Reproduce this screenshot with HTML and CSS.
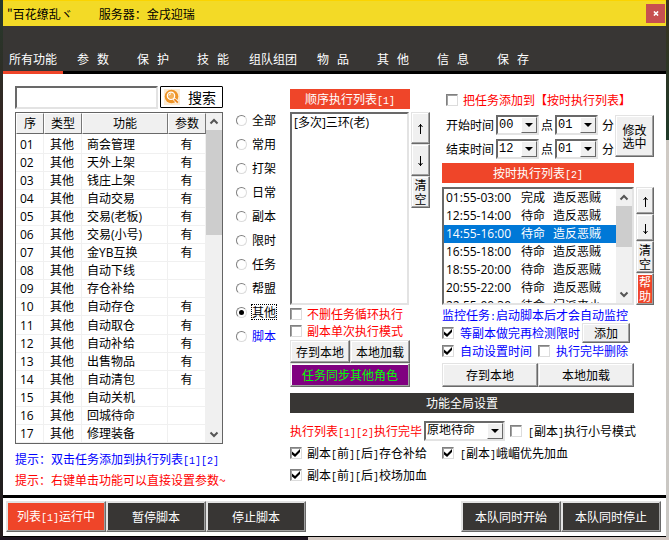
FILE: index.html
```html
<!DOCTYPE html>
<html lang="zh-CN">
<head>
<meta charset="utf-8">
<title>百花缭乱</title>
<link rel="stylesheet" href="styles.css">
</head>
<body>
<div class="window">
  <header class="titlebar">
    <span>"百花缭乱ヾ</span>
    <span class="server">服务器：金戌迎瑞</span>
    <button class="close" type="button" aria-label="关闭"><svg viewBox="0 0 7 6" width="6" height="5"><path d="M1 0.5L6 5.5M6 0.5L1 5.5" stroke="#fff" stroke-width="1.8"/></svg></button>
  </header>
  <nav class="tabs">
    <a class="tab active" href="#all">所有功能</a>
    <a class="tab" href="#params">参   数</a>
    <a class="tab" href="#protect">保   护</a>
    <a class="tab" href="#skills">技   能</a>
    <a class="tab" href="#team">组队组团</a>
    <a class="tab" href="#items">物   品</a>
    <a class="tab" href="#other">其   他</a>
    <a class="tab" href="#info">信   息</a>
    <a class="tab" href="#save">保   存</a>
  </nav>

  <main class="content">
    <section class="functions">
      <form class="search">
        <input class="search-box" type="text" aria-label="搜索功能">
        <button class="search-btn" type="button">
          <svg viewBox="0 0 16 16" width="16" height="16"><rect width="16" height="16" fill="#fdebd2"/><circle cx="7.5" cy="7.5" r="6.8" fill="#ee9426"/><circle cx="7" cy="6.8" r="3.7" fill="#f5b057" stroke="#fff" stroke-width="1.2"/><path d="M5 6.5a2.2 2.2 0 0 1 2-1.7" fill="none" stroke="#fff"/><path d="M9.8 9.6L13.4 13.2" stroke="#fff" stroke-width="3"/><path d="M10.3 10.1L13.8 13.6" stroke="#e9821c" stroke-width="1.8"/></svg>
          <span>搜索</span>
        </button>
      </form>
      <div class="grid-box">
        <table class="grid">
          <colgroup><col class="c-no"><col class="c-type"><col class="c-name"><col class="c-arg"></colgroup>
          <thead><tr><th>序</th><th>类型</th><th>功能</th><th>参数</th></tr></thead>
          <tbody>
            <tr><td>01</td><td>其他</td><td>商会管理</td><td>有</td></tr>
            <tr><td>02</td><td>其他</td><td>天外上架</td><td>有</td></tr>
            <tr><td>03</td><td>其他</td><td>钱庄上架</td><td>有</td></tr>
            <tr><td>04</td><td>其他</td><td>自动交易</td><td>有</td></tr>
            <tr><td>05</td><td>其他</td><td>交易(老板)</td><td>有</td></tr>
            <tr><td>06</td><td>其他</td><td>交易(小号)</td><td>有</td></tr>
            <tr><td>07</td><td>其他</td><td>金YB互换</td><td>有</td></tr>
            <tr><td>08</td><td>其他</td><td>自动下线</td><td></td></tr>
            <tr><td>09</td><td>其他</td><td>存仓补给</td><td></td></tr>
            <tr><td>10</td><td>其他</td><td>自动存仓</td><td>有</td></tr>
            <tr><td>11</td><td>其他</td><td>自动取仓</td><td>有</td></tr>
            <tr><td>12</td><td>其他</td><td>自动补给</td><td>有</td></tr>
            <tr><td>13</td><td>其他</td><td>出售物品</td><td>有</td></tr>
            <tr><td>14</td><td>其他</td><td>自动清包</td><td>有</td></tr>
            <tr><td>15</td><td>其他</td><td>自动关机</td><td></td></tr>
            <tr><td>16</td><td>其他</td><td>回城待命</td><td></td></tr>
            <tr><td>17</td><td>其他</td><td>修理装备</td><td></td></tr>
          </tbody>
        </table>
        <div class="scrollbar">
          <svg class="chev" viewBox="0 0 16 17"><path d="M4.5 10.5L8 7L11.5 10.5" /></svg>
          <span class="thumb thumb-long"></span>
          <svg class="chev end" viewBox="0 0 16 17"><path d="M4.5 6.5L8 10L11.5 6.5" /></svg>
        </div>
      </div>
      <p class="tip blue">提示：双击任务添加到执行列表<span class="n">[1][2]</span></p>
      <p class="tip red">提示：右键单击功能可以直接设置参数~</p>
    </section>

    <fieldset class="filters" aria-label="分类">
      <label><input type="radio" name="cat"><span>全部</span></label>
      <label><input type="radio" name="cat"><span>常用</span></label>
      <label><input type="radio" name="cat"><span>打架</span></label>
      <label><input type="radio" name="cat"><span>日常</span></label>
      <label><input type="radio" name="cat"><span>副本</span></label>
      <label><input type="radio" name="cat"><span>限时</span></label>
      <label><input type="radio" name="cat"><span>任务</span></label>
      <label><input type="radio" name="cat"><span>帮盟</span></label>
      <label><input type="radio" name="cat" checked><span class="focused">其他</span></label>
      <label class="blue"><input type="radio" name="cat"><span>脚本</span></label>
    </fieldset>

    <section class="plans">
      <div class="columns">
        <div class="sequence">
          <h2 class="bar">顺序执行列表<span class="n">[1]</span></h2>
          <div class="list-row seq-row">
            <ul class="listbox"><li>[多次]三环(老)</li></ul>
            <div class="side">
              <button class="btn" type="button" aria-label="上移"><svg viewBox="0 0 7 12" width="7" height="12"><path d="M3.5 1V11M1.5 4L3.5 1.5L5.5 4"/></svg></button>
              <button class="btn" type="button" aria-label="下移"><svg viewBox="0 0 7 12" width="7" height="12"><path d="M3.5 1V11M1.5 8L3.5 10.5L5.5 8"/></svg></button>
              <button class="btn" type="button">清空</button>
            </div>
          </div>
          <label class="check short red"><input type="checkbox"><span>不删任务循环执行</span></label>
          <label class="check short red"><input type="checkbox"><span>副本单次执行模式</span></label>
          <div class="pair seq-pair">
            <button class="btn" type="button">存到本地</button><button class="btn" type="button">本地加载</button>
          </div>
          <button class="btn sync" type="button">任务同步其他角色</button>
        </div>

        <div class="timed">
          <label class="check add-timed red"><input type="checkbox"><span>把任务添加到【按时执行列表】</span></label>
          <div class="times">
            <div class="time-rows">
              <div class="time-row">
                <label for="sh">开始时间</label>
                <span class="combo"><select id="sh"><option>00</option></select><i class="drop"></i></span>
                <label for="sm">点</label>
                <span class="combo"><select id="sm"><option>01</option></select><i class="drop"></i></span>
                <span class="unit">分</span>
              </div>
              <div class="time-row">
                <label for="eh">结束时间</label>
                <span class="combo"><select id="eh"><option>12</option></select><i class="drop"></i></span>
                <label for="em">点</label>
                <span class="combo"><select id="em"><option>01</option></select><i class="drop"></i></span>
                <span class="unit">分</span>
              </div>
            </div>
            <button class="btn modify" type="button">修改<br>选中</button>
          </div>
          <h2 class="bar">按时执行列表<span class="n">[2]</span></h2>
          <div class="list-row timed-row">
            <div class="listbox with-scroll">
              <ul>
                <li><span>01:55-03:00</span><span>完成</span><span>造反恶贼</span></li>
                <li><span>12:55-14:00</span><span>待命</span><span>造反恶贼</span></li>
                <li class="selected"><span>14:55-16:00</span><span>待命</span><span>造反恶贼</span></li>
                <li><span>16:55-18:00</span><span>待命</span><span>造反恶贼</span></li>
                <li><span>18:55-20:00</span><span>待命</span><span>造反恶贼</span></li>
                <li><span>20:55-22:00</span><span>待命</span><span>造反恶贼</span></li>
                <li><span>22:55-00:30</span><span>待命</span><span>门派来小</span></li>
              </ul>
              <div class="scrollbar">
                <svg class="chev" viewBox="0 0 16 17"><path d="M4.5 10.5L8 7L11.5 10.5" /></svg>
                <span class="thumb"></span>
                <svg class="chev end" viewBox="0 0 16 17"><path d="M4.5 6.5L8 10L11.5 6.5" /></svg>
              </div>
            </div>
            <div class="side">
              <button class="btn" type="button" aria-label="上移"><svg viewBox="0 0 7 12" width="7" height="12"><path d="M3.5 1V11M1.5 4L3.5 1.5L5.5 4"/></svg></button>
              <button class="btn" type="button" aria-label="下移"><svg viewBox="0 0 7 12" width="7" height="12"><path d="M3.5 1V11M1.5 8L3.5 10.5L5.5 8"/></svg></button>
              <button class="btn tall" type="button">清空</button>
              <button class="btn tall help" type="button">帮助</button>
            </div>
          </div>
          <p class="monitor blue">监控任务<span class="n">:</span>启动脚本后才会自动监控</p>
          <div class="option-row blue">
            <label class="check"><input type="checkbox" checked><span>等副本做完再检测限时</span></label>
            <button class="btn add" type="button">添加</button>
          </div>
          <div class="option-row spaced blue">
            <label class="check"><input type="checkbox" checked><span>自动设置时间</span></label>
            <label class="check"><input type="checkbox"><span>执行完毕删除</span></label>
          </div>
          <div class="pair timed-pair">
            <button class="btn" type="button">存到本地</button><button class="btn" type="button">本地加载</button>
          </div>
        </div>
      </div>

      <h2 class="bar dark">功能全局设置</h2>
      <div class="finish">
        <label class="red" for="after">执行列表<span class="n">[1][2]</span>执行完毕</label>
        <span class="combo wide"><select id="after"><option>原地待命</option></select><i class="drop"></i></span>
        <label class="check"><input type="checkbox"><span><span class="n">[</span>副本<span class="n">]</span>执行小号模式</span></label>
      </div>
      <div class="globals">
        <label class="check short"><input type="checkbox" checked><span>副本<span class="n">[</span>前<span class="n">][</span>后<span class="n">]</span>存仓补给</span></label>
        <label class="check"><input type="checkbox" checked><span><span class="n">[</span>副本<span class="n">]</span>峨嵋优先加血</span></label>
        <label class="check short"><input type="checkbox" checked><span>副本<span class="n">[</span>前<span class="n">][</span>后<span class="n">]</span>校场加血</span></label>
      </div>
    </section>
  </main>

  <footer class="actions">
    <div class="group">
      <button class="btn action running" type="button">列表<span class="n">[1]</span>运行中</button>
      <button class="btn action" type="button">暂停脚本</button>
      <button class="btn action" type="button">停止脚本</button>
    </div>
    <div class="group">
      <button class="btn action" type="button">本队同时开始</button>
      <button class="btn action" type="button">本队同时停止</button>
    </div>
  </footer>
</div>
</body>
</html>
```
FILE: styles.css
```css
* { box-sizing: border-box; }

body {
  margin: 0;
  min-height: 100vh;
  padding: 0 3px 3px;
  display: flex;
  font: 12px/18px "Noto Sans CJK SC", sans-serif;
  color: #000;
  background:
    linear-gradient(90deg, #1d1420 46%, #d3c8c2 46%) bottom / 100% 3px no-repeat,
    linear-gradient(#263a2c, #3a1a1c 35%, #1c2c22 60%, #241a1e) left / 3px 100% no-repeat,
    linear-gradient(#3b3322, #1f3a28 26%, #cfcac4 26%, #c9c7c3) right / 3px 100% no-repeat;
}

h2, p, ul, fieldset { margin: 0; padding: 0; border: 0; font-size: 12px; font-weight: normal; }
ul { list-style: none; }
button, input, select { font: inherit; color: inherit; margin: 0; padding: 0; }
.blue { color: #00f; }
.red { color: #f00; }
.n { font-family: "Liberation Mono", monospace; font-size: 10px; line-height: 1; }

.window {
  flex: 1;
  min-width: 0;
  display: flex;
  flex-direction: column;
  background: #fff;
  border-bottom: 1px solid #000;
}

.titlebar {
  display: flex;
  align-items: center;
  height: 26px;
  padding: 0 1px 0 4px;
  border-top: 1px solid #fbd400;
  background: #f3da26;
}
.server { margin-left: 26px; }
.close {
  width: 19px;
  height: 19px;
  margin-left: auto;
  display: flex;
  align-items: center;
  justify-content: center;
  border: 0;
  background: #c75050;
}

.tabs {
  display: flex;
  padding-top: 24px;
  background: linear-gradient(#383634, #383634) top / 100% calc(100% - 3px) no-repeat #000;
}
.tab {
  width: 60px;
  height: 24px;
  line-height: 18px;
  border-bottom: 3px solid transparent;
  color: #fff;
  text-align: center;
  text-decoration: none;
  white-space: pre;
}
.tab.active { border-color: #ef4529; }

.content {
  flex: 1;
  display: grid;
  grid-template-columns: minmax(0, 208fr) 67px minmax(0, 364fr);
  padding: 12px 12px 5px;
}

/* Function table */
.functions { min-width: 0; }
.search { display: flex; gap: 2px; height: 23px; margin-bottom: 3px; }
.search-box {
  flex: 1;
  min-width: 0;
  border: 2px solid;
  border-color: #696969 #e3e3e3 #e3e3e3 #696969;
  border-radius: 0;
  background: #fff;
}
.search-btn {
  width: 63px;
  height: 22px;
  display: flex;
  align-items: center;
  gap: 8px;
  padding-left: 3px;
  border: 1px solid #000;
  background: #fff;
  font-size: 14px;
  border-radius: 1px;
}

.grid-box { display: flex; height: 332px; border: 1px solid #646464; }
.grid {
  flex: 1;
  width: 190px;
  table-layout: fixed;
  border-collapse: separate;
  border-spacing: 0;
  font-family: "Open Sans", "Noto Sans CJK SC", sans-serif;
}
.c-no { width: 28px; }
.c-type { width: 38px; }
.c-arg { width: 38px; }
.grid th {
  height: 21px;
  padding: 0;
  border: 1px solid;
  border-color: #fff #777 #696969 #fff;
  background: #f0f0f0;
  font-weight: normal;
  line-height: 18px;
}
.grid td {
  height: 18px;
  padding: 0 0 0 4px;
  border-right: 1px solid #f0f0f0;
  border-bottom: 1px solid #f0f0f0;
  line-height: 17px;
  white-space: nowrap;
}
.grid td:nth-child(2) { padding-left: 6px; }
.grid td:nth-child(3) { padding-left: 5px; }
.grid td:nth-child(4) { padding: 0; text-align: center; }
.grid tbody tr:first-child td { height: 20px; padding-top: 2px; }

.scrollbar { width: 16px; display: flex; flex-direction: column; background: #f0f0f0; }
.chev { width: 16px; height: 17px; fill: none; stroke: #555; stroke-width: 2; }
.chev.end { margin-top: auto; }
.thumb { height: 41px; background: #cdcdcd; }
.thumb-long { height: 105px; }

.tip { line-height: 21px; white-space: nowrap; }
.grid-box + .tip { margin-top: 4px; }

/* Category radios */
.filters { padding: 22px 0 0 13px; min-width: 0; }
.filters label { display: flex; align-items: center; gap: 5px; height: 24px; }
.focused { outline: 1px dotted #000; line-height: 14px; }
input[type="radio"], input[type="checkbox"] {
  appearance: none;
  flex: none;
  display: flex;
  align-items: center;
  justify-content: center;
  border: 1px solid;
  border-color: #808080 #dcdcdc #dcdcdc #808080;
  background: #fff;
}
input[type="radio"] { width: 11px; height: 11px; border-radius: 50%; }
input[type="radio"]:checked::before { content: ""; width: 5px; height: 5px; border-radius: 50%; background: #000; }
input[type="checkbox"] { width: 12px; height: 12px; box-shadow: inset 1px 1px #a0a0a0; }
input[type="checkbox"]:checked::before {
  content: "";
  width: 8px;
  height: 8px;
  background: #000;
  clip-path: polygon(0 30%, 38% 62%, 100% 0, 100% 38%, 38% 100%, 0 68%);
}
.check { display: flex; align-items: center; gap: 6px; white-space: nowrap; }
.check.short { gap: 5px; }

/* Buttons, bars and lists */
.btn {
  border: 1px solid;
  border-color: #e3e3e3 #696969 #696969 #e3e3e3;
  box-shadow: inset -1px -1px #a0a0a0, inset 1px 1px #fff;
  background: #f0f0f0;
  color: #000;
  line-height: 14px;
}
.btn svg { fill: none; stroke: #000; vertical-align: middle; }
.bar { height: 20px; line-height: 19px; background: #ef4529; color: #fff; text-align: center; }
.bar.dark { margin: 6px 20px 8px 0; background: #383634; }

.plans { padding-top: 3px; min-width: 0; }
.columns { display: grid; grid-template-columns: minmax(0, 140fr) minmax(0, 212fr); gap: 12px; }
.sequence > .bar, .sequence > .pair, .sequence > .sync { margin-right: 20px; }
.list-row { display: flex; gap: 2px; }
.listbox {
  flex: 1;
  min-width: 0;
  overflow: hidden;
  border: 2px solid;
  border-color: #696969 #e3e3e3 #e3e3e3 #696969;
  font-family: "Open Sans", "Noto Sans CJK SC", sans-serif;
}
.listbox li { height: 18px; padding-left: 2px; white-space: nowrap; }
.side { display: flex; flex-direction: column; width: 19px; }
.side .btn { height: 32px; width: 100%; }

.seq-row { height: 193px; margin-top: 3px; }
.sequence .check { height: 17px; }
.pair { display: grid; grid-template-columns: 1fr 1fr; }
.seq-pair { height: 23px; margin-top: 1px; }
.sync { display: block; width: calc(100% - 20px); height: 24px; background: #800080; color: #0f0; }

/* Timed list */
.add-timed { height: 22px; padding-left: 4px; margin-bottom: 2px; gap: 5px; }
.times { display: flex; justify-content: space-between; padding-left: 4px; margin-bottom: 2px; }
.time-row { display: flex; align-items: center; gap: 2px; height: 24px; white-space: nowrap; }
.combo { position: relative; display: flex; width: 43px; height: 20px; }
.combo select {
  appearance: none;
  width: 100%;
  padding-left: 1px;
  border: 2px solid;
  border-color: #696969 #e3e3e3 #e3e3e3 #696969;
  border-radius: 0;
  background: #fff;
  font-family: "Liberation Mono", "Noto Sans CJK SC", monospace;
  line-height: 14px;
}
.drop {
  position: absolute;
  top: 2px;
  right: 2px;
  bottom: 2px;
  width: 16px;
  display: flex;
  align-items: center;
  justify-content: center;
  border: 1px solid;
  border-color: #fff #696969 #696969 #fff;
  background: #f0f0f0;
  pointer-events: none;
}
.drop::before { content: ""; border: 4px solid transparent; border-top-color: #000; border-bottom: 0; }
.unit { margin-left: 2px; }
.modify { width: 39px; height: 42px; margin-top: 2px; line-height: 13px; }

.timed > .bar { margin-right: 20px; }
.timed-row { height: 118px; margin-top: 4px; }
.with-scroll { display: flex; }
.with-scroll ul { flex: 1; min-width: 0; }
.with-scroll li { display: flex; gap: 8px; }
.with-scroll li span:first-child { width: 67px; }
.selected { background: #0078d7; color: #fff; }
.timed-row .side { width: 18px; }
.timed-row .side .btn { height: 27px; }
.timed-row .side .tall { height: 32px; }
.timed-row .side .help { background: #ef4529; color: #fff; }
.monitor { margin-top: 1px; white-space: nowrap; }
.option-row { display: flex; align-items: center; gap: 2px; height: 18px; }
.option-row.spaced { gap: 6px; }
.add { width: 48px; height: 20px; }
.timed-pair { height: 24px; margin: 3px 20px 0 0; }

/* Global settings */
.finish { display: flex; align-items: center; gap: 2px; height: 20px; white-space: nowrap; }
.combo.wide { width: 81px; }
.finish .check { margin-left: 3px; }
.globals { display: grid; grid-template-columns: minmax(0, 140fr) minmax(0, 212fr); column-gap: 12px; margin-top: 1px; }
.globals .check { height: 22px; }

.actions {
  display: flex;
  justify-content: space-between;
  padding: 3px 5px 4px 3px;
  border-top: 3px solid #000;
}
.group { display: flex; }
.action { width: 100px; height: 31px; background: #383634; color: #fff; box-shadow: inset -1px -1px #a0a0a0, inset 1px 1px #e3e3e3; }
.running { background: #ef4529; }
```
